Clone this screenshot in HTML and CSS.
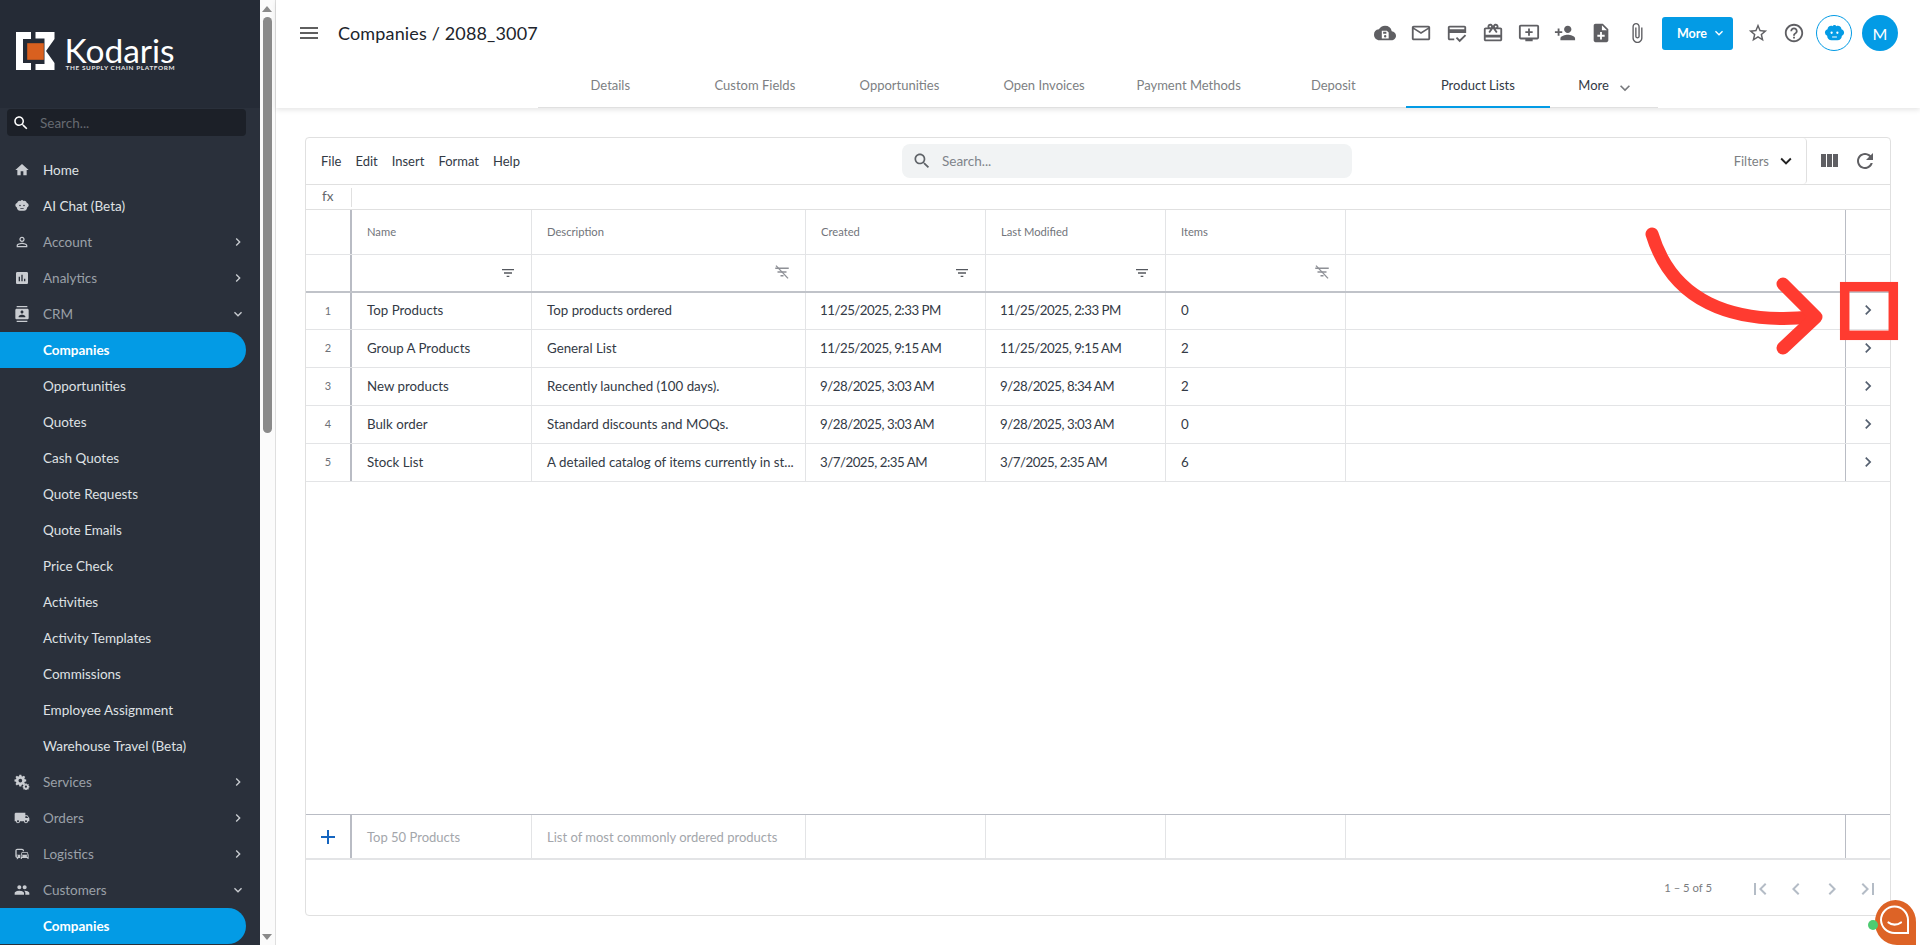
FILE: index.html
```html
<!DOCTYPE html>
<html lang="en">
<head>
<meta charset="utf-8">
<title>Companies / 2088_3007</title>
<link rel="stylesheet" href="styles.css">
</head>
<body>
<svg class="defs" width="0" height="0" aria-hidden="true">
<symbol id="i-home" viewBox="0 0 24 24"><path d="M10 20v-6h4v6h5v-8h3L12 3 2 12h3v8z"/></symbol>
<symbol id="i-menu" viewBox="0 0 24 24"><path d="M3 18h18v-2H3v2zm0-5h18v-2H3v2zm0-7v2h18V6H3z"/></symbol>
<symbol id="i-search" viewBox="0 0 24 24"><path d="M15.5 14h-.79l-.28-.27C15.41 12.59 16 11.11 16 9.5 16 5.91 13.09 3 9.5 3S3 5.91 3 9.5 5.91 16 9.5 16c1.61 0 3.09-.59 4.23-1.57l.27.28v.79l5 4.99L20.49 19l-4.99-5zm-6 0C7.01 14 5 11.99 5 9.5S7.01 5 9.5 5 14 7.01 14 9.5 11.99 14 9.5 14z"/></symbol>
<symbol id="i-right" viewBox="0 0 24 24"><path d="M10 6L8.59 7.41 13.17 12l-4.58 4.59L10 18l6-6z"/></symbol>
<symbol id="i-down" viewBox="0 0 24 24"><path d="M16.59 8.59L12 13.17 7.41 8.59 6 10l6 6 6-6z"/></symbol>
<symbol id="i-person" viewBox="0 0 24 24"><path d="M12 5.9c1.16 0 2.1.94 2.1 2.1s-.94 2.1-2.1 2.1S9.9 9.16 9.9 8s.94-2.1 2.1-2.1m0 9c2.97 0 6.1 1.46 6.1 2.1v1.1H5.9V17c0-.64 3.13-2.1 6.1-2.1M12 4C9.79 4 8 5.79 8 8s1.79 4 4 4 4-1.79 4-4-1.79-4-4-4zm0 9c-2.67 0-8 1.34-8 4v3h16v-3c0-2.66-5.33-4-8-4z"/></symbol>
<symbol id="i-chart" viewBox="0 0 24 24"><path d="M19 3H5c-1.1 0-2 .9-2 2v14c0 1.1.9 2 2 2h14c1.1 0 2-.9 2-2V5c0-1.1-.9-2-2-2zM9 17H7v-7h2v7zm4 0h-2V7h2v10zm4 0h-2v-4h2v4z"/></symbol>
<symbol id="i-contacts" viewBox="0 0 24 24"><path d="M20 0H4v2h16V0zM4 24h16v-2H4v2zM20 4H4c-1.1 0-2 .9-2 2v12c0 1.1.9 2 2 2h16c1.1 0 2-.9 2-2V6c0-1.1-.9-2-2-2zm-8 2.75c1.24 0 2.25 1.01 2.25 2.25s-1.01 2.25-2.25 2.25S9.75 10.24 9.75 9 10.76 6.75 12 6.75zM17 17H7v-1.5c0-1.67 3.33-2.5 5-2.5s5 .83 5 2.5V17z"/></symbol>
<symbol id="i-truck" viewBox="0 0 24 24"><path d="M20 8h-3V4H3c-1.1 0-2 .9-2 2v11h2c0 1.66 1.34 3 3 3s3-1.34 3-3h6c0 1.66 1.34 3 3 3s3-1.34 3-3h2v-5l-3-4zM6 18.500c-.83 0-1.500-.67-1.500-1.500s.67-1.500 1.500-1.500 1.500.67 1.500 1.500-.67 1.500-1.500 1.500zm13.500-9l1.960 2.500H17V9.500h2.500zm-1.500 9c-.83 0-1.500-.67-1.500-1.500s.67-1.500 1.500-1.500 1.500.67 1.500 1.500-.67 1.500-1.500 1.500z"/></symbol>
<symbol id="i-people" viewBox="0 0 24 24"><path d="M16 11c1.66 0 2.99-1.34 2.99-3S17.66 5 16 5c-1.66 0-3 1.34-3 3s1.34 3 3 3zm-8 0c1.66 0 2.99-1.34 2.99-3S9.66 5 8 5C6.34 5 5 6.34 5 8s1.34 3 3 3zm0 2c-2.33 0-7 1.17-7 3.500V19h14v-2.500c0-2.33-4.67-3.500-7-3.500zm8 0c-.29 0-.62.02-.97.05 1.160.84 1.970 1.970 1.970 3.450V19h6v-2.500c0-2.330-4.670-3.500-7-3.500z"/></symbol>
<symbol id="i-bot" viewBox="0 0 24 24"><path fill-rule="evenodd" d="M12 3a2 2 0 0 1 1.900 1.400c.5-.25 1-.4 1.600-.4 2.100 0 3.600 1.500 3.800 3.600 1.600.4 2.700 1.800 2.700 3.400 0 1.500-.9 2.800-2.300 3.300-.3 3-1.700 4.700-4.700 4.700H9c-3 0-4.400-1.700-4.700-4.700A3.500 3.500 0 0 1 2 11c0-1.600 1.100-3 2.700-3.400C4.900 5.500 6.400 4 8.500 4c.6 0 1.100.15 1.600.4A2 2 0 0 1 12 3zM9 10a1.200 1.200 0 1 0 0 2.400A1.200 1.200 0 0 0 9 10zm6 0a1.200 1.200 0 1 0 0 2.400 1.200 1.200 0 0 0 0-2.400zM9.500 15v1.200h5V15z"/></symbol>
<symbol id="i-gears" viewBox="0 0 24 24"><path fill-rule="evenodd" d="M8 1h3l.4 2.200 1.500.6 1.800-1.300 2.100 2.100-1.300 1.800.6 1.500 2.200.4v3l-2.200.4-.6 1.500 1.300 1.800-2.100 2.100-1.800-1.300-1.500.6L11 18.600H8l-.4-2.200-1.500-.6-1.800 1.300-2.100-2.100L3.500 13.200l-.6-1.500L.7 11.300v-3l2.200-.4.6-1.500-1.300-1.800 2.100-2.100 1.800 1.300 1.500-.6zM9.500 7a2.800 2.800 0 1 0 0 5.600 2.800 2.800 0 0 0 0-5.600z"/><path fill-rule="evenodd" d="M18 14l.9.1.3 1.100.9.400 1-.6 1.200 1.200-.6 1 .4.900 1 .3v1.700l-1 .3-.4.900.6 1-1.200 1.200-1-.6-.9.400-.3 1h-1.800l-.3-1-.9-.4-1 .6-1.200-1.200.6-1-.4-.9-1-.3v-1.700l1-.3.4-.9-.6-1 1.200-1.200 1 .6.9-.4.300-1.100zm-.1 3.400a1.600 1.600 0 1 0 0 3.200 1.600 1.600 0 0 0 0-3.200z"/></symbol>
<symbol id="i-commute" viewBox="0 0 24 24"><path d="M12 4H5C3.340 4 2 5.340 2 7v8c0 1.660 1.340 3 3 3l-1 1v1h1l2-2.030L9 18v-5H4V5.980L13 6v2h2V7c0-1.660-1.340-3-3-3zM5 14c.55 0 1 .45 1 1s-.45 1-1 1-1-.45-1-1 .45-1 1-1zm15.570-4.340c-.14-.4-.52-.66-.97-.66h-7.190c-.46 0-.83.26-.98.660L10 13.570v5.340c0 .37.310.67.680.670h.640c.37 0 .680-.310.680-.680V18h8v.900c0 .370.310.680.680.680h.640c.37 0 .670-.310.670-.680l.010-5.330-1.430-3.910zm-8.160.340h7.190l.96 3h-9.100l.950-3zM12 16c-.55 0-1-.45-1-1s.45-1 1-1 1 .45 1 1-.45 1-1 1zm8 0c-.55 0-1-.45-1-1s.45-1 1-1 1 .45 1 1-.45 1-1 1z"/></symbol>
<symbol id="i-cloud" viewBox="0 0 24 24"><path fill-rule="evenodd" d="M19.350 10.040A7.490 7.490 0 0 0 12 4C9.110 4 6.600 5.640 5.350 8.040A5.994 5.994 0 0 0 0 14c0 3.310 2.690 6 6 6h13c2.760 0 5-2.240 5-5 0-2.640-2.050-4.780-4.650-4.960zM8.500 9.500h5.500l2 2v6.500H8.500zM10 10.500v2.300h3.500v-2.300zM12.200 14.300a1.300 1.300 0 1 0 0 2.600 1.300 1.300 0 0 0 0-2.600z"/></symbol>
<symbol id="i-mail" viewBox="0 0 24 24"><path d="M20 4H4c-1.100 0-1.990.9-1.990 2L2 18c0 1.100.9 2 2 2h16c1.100 0 2-.9 2-2V6c0-1.100-.9-2-2-2zm0 14H4V8l8 5 8-5v10zm-8-7L4 6h16l-8 5z"/></symbol>
<symbol id="i-card" viewBox="0 0 24 24"><path d="M20 4H4c-1.110 0-2 .89-2 2v12c0 1.110.89 2 2 2h5v-2H4v-6h18V6c0-1.110-.89-2-2-2zm0 4H4V6h16v2zm-5.070 11.170l-2.830-2.830-1.410 1.410L14.930 22 22 14.930l-1.410-1.410-5.660 5.650z"/></symbol>
<symbol id="i-gift" viewBox="0 0 24 24"><path d="M20 6h-2.180c.11-.31.18-.65.18-1 0-1.660-1.340-3-3-3-1.050 0-1.960.54-2.500 1.350l-.5.670-.5-.68C10.960 2.540 10.050 2 9 2 7.340 2 6 3.340 6 5c0 .35.07.69.18 1H4c-1.110 0-1.990.89-1.990 2L2 19c0 1.110.89 2 2 2h16c1.110 0 2-.89 2-2V8c0-1.110-.89-2-2-2zm-5-2c.55 0 1 .45 1 1s-.45 1-1 1-1-.45-1-1 .45-1 1-1zM9 4c.55 0 1 .45 1 1s-.45 1-1 1-1-.45-1-1 .45-1 1-1zm11 15H4v-2h16v2zm0-5H4V8h5.080L7 10.830 8.620 12 11 8.760l1-1.360 1 1.360L15.380 12 17 10.830 14.920 8H20v6z"/></symbol>
<symbol id="i-queue" viewBox="0 0 24 24"><path d="M21 3H3c-1.110 0-2 .89-2 2v12c0 1.100.89 2 2 2h5v2h8v-2h5c1.100 0 1.990-.9 1.990-2L23 5c0-1.110-.9-2-2-2zm0 14H3V5h18v12zm-5-7v2h-3v3h-2v-3H8v-2h3V7h2v3h3z"/></symbol>
<symbol id="i-personadd" viewBox="0 0 24 24"><path d="M15 12c2.210 0 4-1.790 4-4s-1.790-4-4-4-4 1.790-4 4 1.790 4 4 4zm-9-2V7H4v3H1v2h3v3h2v-3h3v-2H6zm9 4c-2.670 0-8 1.340-8 4v2h16v-2c0-2.660-5.330-4-8-4z"/></symbol>
<symbol id="i-note" viewBox="0 0 24 24"><path d="M14 2H6c-1.100 0-1.990.9-1.990 2L4 20c0 1.100.89 2 1.990 2H18c1.100 0 2-.9 2-2V8l-6-6zm2 14h-3v3h-2v-3H8v-2h3v-3h2v3h3v2zm-3-7V3.500L18.500 9H13z"/></symbol>
<symbol id="i-attach" viewBox="0 0 24 24"><path d="M16.500 6v11.500c0 2.210-1.790 4-4 4s-4-1.790-4-4V5c0-1.380 1.120-2.500 2.500-2.500s2.500 1.120 2.500 2.500v10.500c0 .55-.45 1-1 1s-1-.45-1-1V6H10v9.500c0 1.380 1.120 2.500 2.500 2.500s2.500-1.120 2.500-2.500V5c0-2.210-1.790-4-4-4S7 2.790 7 5v12.500c0 3.040 2.460 5.500 5.500 5.500s5.500-2.460 5.500-5.500V6h-1.500z"/></symbol>
<symbol id="i-star" viewBox="0 0 24 24"><path d="M22 9.240l-7.190-.62L12 2 9.190 8.630 2 9.240l5.460 4.730L5.820 21 12 17.270 18.180 21l-1.630-7.030L22 9.240zM12 15.400l-3.760 2.270 1-4.280-3.320-2.880 4.380-.38L12 6.100l1.710 4.040 4.380.38-3.320 2.880 1 4.280L12 15.400z"/></symbol>
<symbol id="i-help" viewBox="0 0 24 24"><path d="M11 18h2v-2h-2v2zm1-16C6.480 2 2 6.480 2 12s4.480 10 10 10 10-4.480 10-10S17.520 2 12 2zm0 18c-4.410 0-8-3.590-8-8s3.590-8 8-8 8 3.590 8 8-3.590 8-8 8zm0-14c-2.210 0-4 1.790-4 4h2c0-1.100.9-2 2-2s2 .9 2 2c0 2-3 1.750-3 5h2c0-2.250 3-2.500 3-5 0-2.210-1.790-4-4-4z"/></symbol>
<symbol id="i-columns" viewBox="0 0 24 24"><path d="M10 18h5V5h-5v13zm-6 0h5V5H4v13zM16 5v13h5V5h-5z"/></symbol>
<symbol id="i-refresh" viewBox="0 0 24 24"><path d="M17.650 6.350C16.200 4.900 14.210 4 12 4c-4.420 0-7.990 3.580-7.990 8s3.570 8 7.990 8c3.730 0 6.840-2.550 7.730-6h-2.080c-.82 2.330-3.040 4-5.650 4-3.310 0-6-2.690-6-6s2.690-6 6-6c1.660 0 3.140.69 4.220 1.780L13 11h7V4l-2.350 2.350z"/></symbol>
<symbol id="i-filter" viewBox="0 0 24 24"><path d="M10 18h4v-2h-4v2zM3 6v2h18V6H3zm3 7h12v-2H6v2z"/></symbol>
<symbol id="i-filteroff" viewBox="0 0 24 24"><path d="M10 18h4v-2h-4v2zM3 6v2h18V6H3zm3 7h12v-2H6v2z"/><path d="M4 3.500l16 17" fill="none" stroke="currentColor" stroke-width="1.800"/></symbol>
<symbol id="i-first" viewBox="0 0 24 24"><path d="M18.410 16.590L13.820 12l4.590-4.590L17 6l-6 6 6 6zM6 6h2v12H6z"/></symbol>
<symbol id="i-last" viewBox="0 0 24 24"><path d="M5.590 7.410L10.180 12l-4.590 4.590L7 18l6-6-6-6zM16 6h2v12h-2z"/></symbol>
<symbol id="i-left" viewBox="0 0 24 24"><path d="M15.410 7.410L14 6l-6 6 6 6 1.410-1.410L10.830 12z"/></symbol>
<symbol id="i-add" viewBox="0 0 24 24"><path d="M19 13h-6v6h-2v-6H5v-2h6V5h2v6h6v2z"/></symbol>
</svg>

<div class="app">
  <aside class="sidebar">
    <div class="brand">
      <svg class="logo-mark" viewBox="0 0 39 38"><path fill="#fff" d="M0 0H15V7H7V31H15V38H0z"/><path fill="#fff" d="M19.500 0H38.500V7L30 19L38.500 31V38H19.500V32H28.500V6.500H19.500z"/><rect x="11.200" y="11.200" width="16.600" height="16.600" fill="#d9601f"/></svg>
      <div class="logo-text"><span class="logo-name">Kodaris</span><span class="logo-tag">THE SUPPLY CHAIN PLATFORM</span></div>
    </div>
    <div class="side-search"><svg class="ic"><use href="#i-search"/></svg><span>Search...</span></div>
    <nav class="nav">
      <a class="nav-item strong"><svg class="ic"><use href="#i-home"/></svg><span>Home</span></a>
      <a class="nav-item strong"><svg class="ic"><use href="#i-bot"/></svg><span>AI Chat (Beta)</span></a>
      <a class="nav-item"><svg class="ic"><use href="#i-person"/></svg><span>Account</span><svg class="ic caret"><use href="#i-right"/></svg></a>
      <a class="nav-item"><svg class="ic"><use href="#i-chart"/></svg><span>Analytics</span><svg class="ic caret"><use href="#i-right"/></svg></a>
      <a class="nav-item"><svg class="ic"><use href="#i-contacts"/></svg><span>CRM</span><svg class="ic caret"><use href="#i-down"/></svg></a>
      <a class="nav-item sub active"><span>Companies</span></a>
      <a class="nav-item sub"><span>Opportunities</span></a>
      <a class="nav-item sub"><span>Quotes</span></a>
      <a class="nav-item sub"><span>Cash Quotes</span></a>
      <a class="nav-item sub"><span>Quote Requests</span></a>
      <a class="nav-item sub"><span>Quote Emails</span></a>
      <a class="nav-item sub"><span>Price Check</span></a>
      <a class="nav-item sub"><span>Activities</span></a>
      <a class="nav-item sub"><span>Activity Templates</span></a>
      <a class="nav-item sub"><span>Commissions</span></a>
      <a class="nav-item sub"><span>Employee Assignment</span></a>
      <a class="nav-item sub"><span>Warehouse Travel (Beta)</span></a>
      <a class="nav-item"><svg class="ic"><use href="#i-gears"/></svg><span>Services</span><svg class="ic caret"><use href="#i-right"/></svg></a>
      <a class="nav-item"><svg class="ic"><use href="#i-truck"/></svg><span>Orders</span><svg class="ic caret"><use href="#i-right"/></svg></a>
      <a class="nav-item"><svg class="ic"><use href="#i-commute"/></svg><span>Logistics</span><svg class="ic caret"><use href="#i-right"/></svg></a>
      <a class="nav-item"><svg class="ic"><use href="#i-people"/></svg><span>Customers</span><svg class="ic caret"><use href="#i-down"/></svg></a>
      <a class="nav-item sub active"><span>Companies</span></a>
    </nav>
  </aside>

  <div class="scrollbar">
    <span class="sb-up"></span>
    <span class="sb-thumb"></span>
    <span class="sb-down"></span>
  </div>

  <main class="main">
    <header class="topbar">
      <div class="topline">
        <svg class="ic menu-ic"><use href="#i-menu"/></svg>
        <h1 class="title">Companies / 2088_3007</h1>
        <div class="actions">
          <svg class="ic act"><use href="#i-cloud"/></svg>
          <svg class="ic act"><use href="#i-mail"/></svg>
          <svg class="ic act"><use href="#i-card"/></svg>
          <svg class="ic act"><use href="#i-gift"/></svg>
          <svg class="ic act"><use href="#i-queue"/></svg>
          <svg class="ic act"><use href="#i-personadd"/></svg>
          <svg class="ic act"><use href="#i-note"/></svg>
          <svg class="ic act"><use href="#i-attach"/></svg>
          <button class="more-btn">More<svg class="ic"><use href="#i-down"/></svg></button>
          <svg class="ic act star"><use href="#i-star"/></svg>
          <svg class="ic act"><use href="#i-help"/></svg>
          <span class="bot-circle"><svg class="ic"><use href="#i-bot"/></svg></span>
          <span class="avatar">M</span>
        </div>
      </div>
      <div class="tabs">
        <a class="tab">Details</a>
        <a class="tab">Custom Fields</a>
        <a class="tab">Opportunities</a>
        <a class="tab">Open Invoices</a>
        <a class="tab">Payment Methods</a>
        <a class="tab">Deposit</a>
        <a class="tab current">Product Lists</a>
        <a class="tab tab-more">More<svg class="ic"><use href="#i-down"/></svg></a>
      </div>
    </header>

    <section class="card">
      <div class="toolbar">
        <div class="menus"><span>File</span><span>Edit</span><span>Insert</span><span>Format</span><span>Help</span></div>
        <div class="search"><svg class="ic"><use href="#i-search"/></svg><span>Search...</span></div>
        <div class="tools">
          <span class="filters">Filters<svg class="ic"><use href="#i-down"/></svg></span>
          <span class="tool-icons"><svg class="ic"><use href="#i-columns"/></svg><svg class="ic"><use href="#i-refresh"/></svg></span>
        </div>
      </div>
      <div class="fx"><span class="fx-label">fx</span></div>
      <div class="grid">
        <div class="row head"><span class="c"></span><span class="c">Name</span><span class="c">Description</span><span class="c">Created</span><span class="c">Last Modified</span><span class="c">Items</span><span class="c"></span><span class="c"></span></div>
        <div class="row filter">
          <span class="c"></span>
          <span class="c"><svg class="ic"><use href="#i-filter"/></svg></span>
          <span class="c"><svg class="ic off"><use href="#i-filteroff"/></svg></span>
          <span class="c"><svg class="ic"><use href="#i-filter"/></svg></span>
          <span class="c"><svg class="ic"><use href="#i-filter"/></svg></span>
          <span class="c"><svg class="ic off"><use href="#i-filteroff"/></svg></span>
          <span class="c"></span><span class="c"></span>
        </div>
        <div class="row data"><span class="c num">1</span><span class="c">Top Products</span><span class="c">Top products ordered</span><span class="c date">11/25/2025, 2:33 PM</span><span class="c date">11/25/2025, 2:33 PM</span><span class="c">0</span><span class="c"></span><span class="c go"><svg class="ic"><use href="#i-right"/></svg></span></div>
        <div class="row data"><span class="c num">2</span><span class="c">Group A Products</span><span class="c">General List</span><span class="c date">11/25/2025, 9:15 AM</span><span class="c date">11/25/2025, 9:15 AM</span><span class="c">2</span><span class="c"></span><span class="c go"><svg class="ic"><use href="#i-right"/></svg></span></div>
        <div class="row data"><span class="c num">3</span><span class="c">New products</span><span class="c">Recently launched (100 days).</span><span class="c date">9/28/2025, 3:03 AM</span><span class="c date">9/28/2025, 8:34 AM</span><span class="c">2</span><span class="c"></span><span class="c go"><svg class="ic"><use href="#i-right"/></svg></span></div>
        <div class="row data"><span class="c num">4</span><span class="c">Bulk order</span><span class="c">Standard discounts and MOQs.</span><span class="c date">9/28/2025, 3:03 AM</span><span class="c date">9/28/2025, 3:03 AM</span><span class="c">0</span><span class="c"></span><span class="c go"><svg class="ic"><use href="#i-right"/></svg></span></div>
        <div class="row data"><span class="c num">5</span><span class="c">Stock List</span><span class="c">A detailed catalog of items currently in st...</span><span class="c date">3/7/2025, 2:35 AM</span><span class="c date">3/7/2025, 2:35 AM</span><span class="c">6</span><span class="c"></span><span class="c go"><svg class="ic"><use href="#i-right"/></svg></span></div>
        <div class="spacer"></div>
        <div class="row add"><span class="c plus"><svg class="ic"><use href="#i-add"/></svg></span><span class="c">Top 50 Products</span><span class="c">List of most commonly ordered products</span><span class="c"></span><span class="c"></span><span class="c"></span><span class="c"></span><span class="c"></span></div>
      </div>
      <div class="pager">
        <span class="range">1 – 5 of 5</span>
        <svg class="ic"><use href="#i-first"/></svg>
        <svg class="ic"><use href="#i-left"/></svg>
        <svg class="ic"><use href="#i-right"/></svg>
        <svg class="ic"><use href="#i-last"/></svg>
      </div>
    </section>
  </main>
</div>

<svg class="callout" viewBox="0 0 280 140" aria-hidden="true">
  <path class="arrow" d="M12 14C32 80 90 105 172 97"/>
  <path class="arrow" d="M143 64L176 97L143 128"/>
  <rect class="box" x="204.700" y="66.700" width="48.600" height="48.600"/>
</svg>

<div class="chat">
  <svg viewBox="0 0 41 45" aria-hidden="true"><path fill="#dd6326" d="M0 22A20.500 22 0 0 1 41 22V45H22A22 22 0 0 1 0 22z"/><path fill="none" stroke="#fff" stroke-width="2" d="M6 20A13.500 13.500 0 0 1 33 20V33H19.500A13.500 13.500 0 0 1 6 20z"/><path fill="none" stroke="#fff" stroke-width="2.200" stroke-linecap="round" d="M13.500 22.500c3 2.800 9 2.800 12.500 0"/></svg>
  <span class="chat-dot"></span>
</div>
</body>
</html>
```

FILE: styles.css
```css
* { box-sizing: border-box; }
html, body { margin: 0; height: 100%; overflow: hidden; }
body { font-family: "Lato", "Noto Sans", sans-serif; font-size: 14px; color: #333a45; background: #fff; }
.defs { position: absolute; }
.ic { width: 24px; height: 24px; fill: currentColor; flex: none; display: block; }
.app { display: flex; height: 945px; }

/* sidebar */
.sidebar { width: 260px; flex: none; background: #2a303b; color: #fff; overflow: hidden; height: 945px; }
.brand { height: 108px; background: #252b36; display: flex; align-items: flex-start; padding: 32px 0 0 15.500px; gap: 10px; }
.logo-mark { width: 39px; height: 38px; flex: none; }
.logo-text { display: flex; flex-direction: column; padding-top: 4px; }
.logo-name { font-size: 33.500px; line-height: 28px; height: 28px; color: #fff; }
.logo-tag { font-size: 6.400px; line-height: 8px; letter-spacing: .62px; color: #e4e4e4; font-weight: 700; white-space: nowrap; margin-left: 1px; }
.side-search { margin: 1px 14px 0 7px; height: 27px; background: #1c2028; border-radius: 4px; display: flex; align-items: center; padding-left: 5px; gap: 10px; color: #666a71; font-size: 13.500px; }
.side-search .ic { color: #fff; width: 18px; height: 18px; }
.nav { padding-top: 16px; display: flex; flex-direction: column; }
.nav-item { height: 36px; flex: none; display: flex; align-items: center; padding: 0 14px; font-size: 13.500px; color: #9ba0a8; gap: 10px; margin-right: 14px; }
.nav-item .ic { width: 16px; height: 16px; color: #c9ccd1; }
.nav-item span { flex: 1; white-space: nowrap; padding-left: 3px; }
.nav-item .caret { width: 16px; height: 16px; margin-right: -13.500px; }
.nav-item.strong { color: #dfe1e4; }
.nav-item.sub { color: #dfe1e4; padding-left: 43px; }
.nav-item.sub span { padding-left: 0; }
.nav-item.active { background: #039be5; color: #fff; border-radius: 0 18px 18px 0; font-weight: 700; }

/* scrollbar */
.scrollbar { width: 16px; flex: none; background: #fbfbfb; border-right: 1px solid #dfdfdf; display: flex; flex-direction: column; align-items: center; padding: 3px 0; height: 945px; }
.sb-up { width: 0; height: 0; border: 5px solid transparent; border-top: 0; border-bottom: 6px solid #8a8a8a; margin-top: 3px; margin-right: 1px; }
.sb-thumb { width: 9px; height: 416px; margin-top: 5px; margin-right: 1px; border-radius: 5px; background: #8a8a8a; }
.sb-down { width: 0; height: 0; border: 5px solid transparent; border-bottom: 0; border-top: 6px solid #8a8a8a; margin-top: auto; margin-bottom: 2px; margin-right: 1px; }

/* main */
.main { flex: 1; min-width: 0; display: flex; flex-direction: column; padding-bottom: 29px; }
.topbar { height: 108px; flex: none; background: #fff; box-shadow: 0 2px 5px rgba(0,0,0,.1); display: flex; flex-direction: column; position: relative; }
.topline { height: 66px; display: flex; align-items: center; padding: 0 22px 0 21px; }
.menu-ic { color: #5f5f5f; width: 24px; height: 24px; }
.title { margin: 0 0 0 17px; font-size: 18px; font-weight: 400; color: #20242c; letter-spacing: .15px; }
.actions { margin-left: auto; display: flex; align-items: center; }
.act { color: #5f5f63; width: 22px; height: 22px; margin-right: 14px; }
.more-btn { border: 0; height: 33px; width: 71px; margin: 0 9px 0 0; background: #039be5; color: #fff; font: 700 12.500px "Lato", sans-serif; border-radius: 3px; display: flex; align-items: center; gap: 4px; padding: 0 0 0 15px; }
.more-btn .ic { width: 16px; height: 16px; }
.star { margin-left: 5px; }
.bot-circle { width: 36px; height: 36px; border: 1px solid #039be5; border-radius: 50%; display: flex; align-items: center; justify-content: center; color: #039be5; margin-right: 10px; margin-left: -3px; }
.bot-circle .ic { width: 23px; height: 23px; }
.avatar { width: 36px; height: 36px; border-radius: 50%; background: #039be5; color: #fff; font-size: 16px; display: flex; align-items: center; justify-content: center; }
.tabs { height: 42px; margin-left: 262px; width: 1120px; display: flex; border-bottom: 1px solid #e0e0e0; }
.tab { width: 144.600px; text-align: center; line-height: 38px; color: #7d7f83; font-size: 13px; }
.tab.current { color: #333a45; border-bottom: 2px solid #039be5; height: 42px; }
.tab-more { width: 107px; color: #333a45; display: flex; align-items: flex-start; justify-content: center; gap: 6px; padding-left: 6px; }
.tab-more .ic { width: 20px; height: 20px; color: #77797d; margin-top: 12px; }

/* card */
.card { flex: 1; margin: 29px 29px 0 29px; border: 1px solid #e0e0e0; border-radius: 4px; display: flex; flex-direction: column; min-height: 0; }
.toolbar { height: 47px; flex: none; border-bottom: 1px solid #e0e0e0; display: flex; align-items: center; }
.menus { display: flex; gap: 14px; padding-left: 15px; font-size: 13px; color: #333a45; width: 596px; }
.search { width: 450px; height: 34px; background: #f1f3f4; border-radius: 8px; display: flex; align-items: center; padding-left: 10px; gap: 10px; color: #80848a; font-size: 13.500px; }
.search .ic { width: 20px; height: 20px; color: #5f6368; }
.tools { margin-left: auto; display: flex; align-items: center; height: 100%; }
.filters { display: flex; align-items: center; gap: 6px; color: #7d7f83; font-size: 13px; padding-right: 9px; border-right: 1px solid #e0e0e0; height: 100%; border-radius: 0 4px 4px 0; }
.filters .ic { width: 22px; height: 22px; color: #222; }
.tool-icons { display: flex; gap: 12px; padding: 0 13px 0 10px; }
.tool-icons .ic { width: 24px; height: 24px; color: #5f5f63; }
.fx { height: 25px; flex: none; border-bottom: 1px solid #e0e0e0; display: flex; align-items: center; }
.fx-label { width: 46px; height: 19px; line-height: 17px; border-right: 1px solid #e0e0e0; padding-left: 16px; color: #63666b; font-size: 13.500px; }
.grid { flex: 1; display: flex; flex-direction: column; min-height: 0; }
.row { display: grid; grid-template-columns: 46px 180px 274px 180px 180px 180px 500px 1fr; flex: none; border-bottom: 1px solid #e3e4e6; }
.c { border-right: 1px solid #e3e4e6; display: flex; align-items: center; padding: 0 15px; white-space: nowrap; min-width: 0; overflow: hidden; }
.c:first-child { border-right: 2px solid #b9bcc4; padding: 0; justify-content: center; }
.c:nth-child(7) { border-right: 1px solid #b9bcc4; }
.c:last-child { border-right: 0; }
.head { height: 45px; font-size: 11.200px; color: #71747a; }
.head .c { padding-bottom: 2px; }
.filter { height: 38px; border-bottom: 2px solid #c0c3c9; }
.filter .c { justify-content: flex-end; padding-right: 15px; }
.filter .ic { width: 16px; height: 16px; color: #55585e; }
.filter .ic.off { color: #8e9096; width: 18px; height: 18px; margin-top: -3px; margin-right: -1px; }
.data { height: 38px; font-size: 13.300px; color: #333a45; }
.filter + .data { height: 37px; }
.data .c { padding-bottom: 2px; }
.data .date { letter-spacing: -.5px; padding-left: 14px; }
.num { font-size: 11px; color: #6e7178; }
.go { padding: 0; justify-content: center; }
.go .ic { width: 20px; height: 20px; color: #556070; }
.spacer { flex: 1; }
.add { height: 46px; font-size: 13px; color: #a3a6ab; border-top: 1px solid #b9bcc4; border-bottom: 2px solid #e3e4e6; }
.plus .ic { width: 24px; height: 24px; color: #1565c0; }
.pager { height: 55px; flex: none; display: flex; align-items: center; justify-content: flex-end; padding-right: 10px; gap: 12px; color: #b4bcc6; }
.pager .ic { width: 24px; height: 24px; margin-top: 3px; }
.range { font-size: 11.300px; color: #7a7c80; margin-right: 24px; }

/* overlays */
.callout { position: absolute; left: 1640px; top: 220px; width: 280px; height: 140px; }
.arrow { fill: none; stroke: #ff3b30; stroke-width: 13px; stroke-linecap: round; stroke-linejoin: round; }
.box { fill: none; stroke: #ff3b30; stroke-width: 9.500px; }
.chat { position: absolute; left: 1868px; top: 900px; width: 48px; height: 45px; }
.chat svg { position: absolute; left: 7px; top: 0; width: 41px; height: 45px; }
.chat-dot { position: absolute; left: 0; top: 20px; width: 10px; height: 10px; border-radius: 50%; background: #4ecb71; }
```
